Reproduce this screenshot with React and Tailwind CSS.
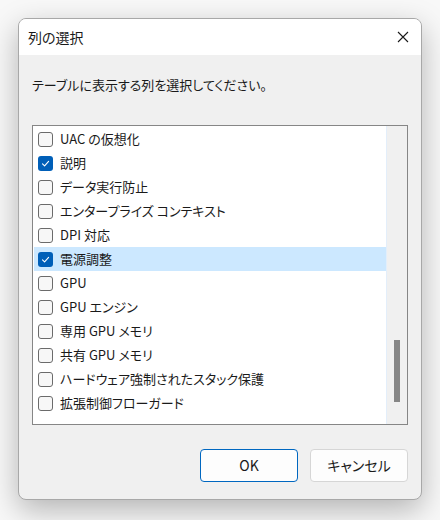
import React, { useState } from 'react';

const columns = [
  { label: 'UAC の仮想化', checked: false },
  { label: '説明', checked: true },
  { label: 'データ実行防止', checked: false },
  { label: 'エンタープライズ コンテキスト', checked: false },
  { label: 'DPI 対応', checked: false },
  { label: '電源調整', checked: true, selected: true },
  { label: 'GPU', checked: false },
  { label: 'GPU エンジン', checked: false },
  { label: '専用 GPU メモリ', checked: false },
  { label: '共有 GPU メモリ', checked: false },
  { label: 'ハードウェア強制されたスタック保護', checked: false },
  { label: '拡張制御フローガード', checked: false },
];

const CheckBox = ({ checked }) =>
  checked ? (
    <span className="flex h-[15px] w-[15px] shrink-0 items-center justify-center rounded-[3px] bg-[#005fb8]">
      <svg width="9" height="9" viewBox="0 0 9 9" fill="none">
        <path d="M1.5 4.8 L3.6 6.8 L7.6 2.4" stroke="#ffffff" strokeWidth="1.1" strokeLinecap="round" strokeLinejoin="round" />
      </svg>
    </span>
  ) : (
    <span className="h-[15px] w-[15px] shrink-0 rounded-[3px] border border-[#6b6b6b] bg-[#f7f7f7]" />
  );

const App = () => {
  const [items, setItems] = useState(columns);

  const toggle = (i) =>
    setItems((prev) => prev.map((it, j) => (j === i ? { ...it, checked: !it.checked } : it)));

  return (
    <div
      className="h-[520px] w-[440px] bg-[#f8f8f8] pt-[18px] pl-[18px] text-[#1a1a1a]"
      style={{ fontFamily: '"Noto Sans CJK JP", "Noto Sans", sans-serif', fontFeatureSettings: '"palt"' }}
    >
      <div className="flex h-[482px] w-[404px] flex-col overflow-hidden rounded-lg border border-[#a8a8a8] bg-[#f0f0f0] shadow-[0_10px_30px_rgba(0,0,0,0.28)]">
        {/* Title bar */}
        <div className="flex h-[36px] items-center justify-between bg-white pr-[12px] pl-[9px]">
          <span className="text-[14px]">列の選択</span>
          <svg width="12" height="12" viewBox="0 0 12 12">
            <path d="M1 1 L11 11 M11 1 L1 11" stroke="#1a1a1a" strokeWidth="1.1" />
          </svg>
        </div>

        {/* Body */}
        <div className="flex flex-1 flex-col px-[13px]">
          <p className="mt-[20px] h-[20px] text-[13px] leading-[20px]">テーブルに表示する列を選択してください。</p>

          <div className="mt-[30px] flex h-[300px] border border-[#868686] bg-white">
            <div className="flex-1 pt-px pl-px">
              {items.map((it, i) => (
                <div
                  key={it.label}
                  onClick={() => toggle(i)}
                  className={`flex h-[24px] items-center gap-[7px] pl-[4px] text-[13px] ${it.selected ? 'bg-[#cce8ff]' : ''}`}
                >
                  <CheckBox checked={it.checked} />
                  <span className="whitespace-nowrap">{it.label}</span>
                </div>
              ))}
            </div>
            <div className="relative w-[21px] border-l border-[#e3eefa] bg-[#f0f0f0]">
              <div className="absolute top-[214px] left-[7px] h-[62px] w-[6px] bg-[#868686]" />
            </div>
          </div>

          {/* Buttons */}
          <div className="mt-[24px] flex justify-end gap-[12px]">
            <button className="h-[33px] w-[98px] rounded-[4px] border border-[#0067c0] bg-[#fdfdfd] text-[14px]">
              OK
            </button>
            <button className="h-[33px] w-[98px] rounded-[4px] border border-[#d6d6d6] bg-[#fdfdfd] text-[14px]">
              キャンセル
            </button>
          </div>
        </div>
      </div>
    </div>
  );
};

export default App;
